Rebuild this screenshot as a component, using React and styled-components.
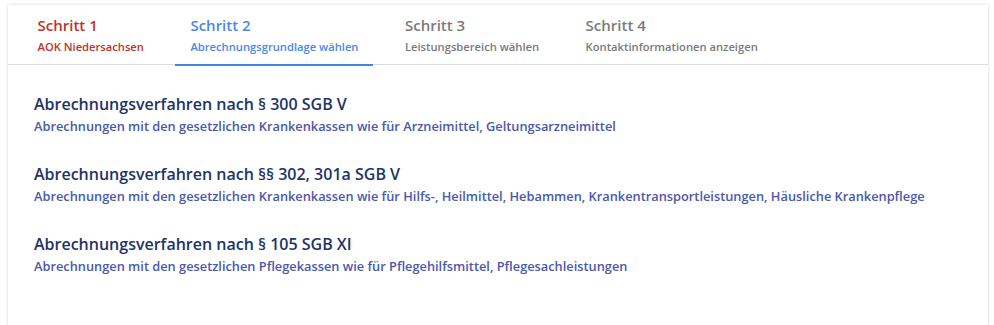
import React from 'react';
import styled, { createGlobalStyle } from 'styled-components';

const GlobalStyle = createGlobalStyle`
  body {
    margin: 0;
    background: #ffffff;
    font-family: "Open Sans", "Liberation Sans", sans-serif;
  }
`;

const Page = styled.div`
  padding: 5px 6px 0 8px;
  height: 325px;
  box-sizing: border-box;
  overflow: hidden;
`;

const Card = styled.div`
  background: #fff;
  height: 340px;
  box-shadow: 0 0 3px rgba(0, 0, 0, 0.18);
`;

const TabList = styled.div`
  display: flex;
  gap: 16.5px;
  padding: 0 14px 0 14.5px;
  border-bottom: 1px solid #dcdcdc;
  height: 59px;
`;

const Tab = styled.div`
  display: flex;
  flex-direction: column;
  padding: 9px 15px 0;
  box-sizing: border-box;
  margin-bottom: -2px;
  border-bottom: 2px solid ${p => (p.active ? '#3f86ea' : 'transparent')};
  color: ${p => p.color};
`;

const TabTitle = styled.span`
  font-size: 15px;
  font-weight: 600;
  line-height: 22px;
`;

const TabSub = styled.span`
  font-size: 11.2px;
  font-weight: 600;
  line-height: 16px;
  margin-top: 3px;
`;

const List = styled.div`
  display: flex;
  flex-direction: column;
  gap: 28px;
  padding: 28px 26px;
`;

const Entry = styled.div`
  display: flex;
  flex-direction: column;
  gap: 2px;
`;

const EntryTitle = styled.div`
  font-size: 16px;
  font-weight: 600;
  color: #1d3468;
  line-height: 22px;
`;

const EntryText = styled.div`
  font-size: 12.8px;
  font-weight: 600;
  color: #4a58ad;
  line-height: 18px;
`;

const steps = [
  { title: 'Schritt 1', sub: 'AOK Niedersachsen', color: '#c0332b' },
  { title: 'Schritt 2', sub: 'Abrechnungsgrundlage wählen', color: '#4b87ea', active: true },
  { title: 'Schritt 3', sub: 'Leistungsbereich wählen', color: '#7a7a7a' },
  { title: 'Schritt 4', sub: 'Kontaktinformationen anzeigen', color: '#7a7a7a' },
];

const entries = [
  {
    title: 'Abrechnungsverfahren nach § 300 SGB V',
    text: 'Abrechnungen mit den gesetzlichen Krankenkassen wie für Arzneimittel, Geltungsarzneimittel',
  },
  {
    title: 'Abrechnungsverfahren nach §§ 302, 301a SGB V',
    text: 'Abrechnungen mit den gesetzlichen Krankenkassen wie für Hilfs-, Heilmittel, Hebammen, Krankentransportleistungen, Häusliche Krankenpflege',
  },
  {
    title: 'Abrechnungsverfahren nach § 105 SGB XI',
    text: 'Abrechnungen mit den gesetzlichen Pflegekassen wie für Pflegehilfsmittel, Pflegesachleistungen',
  },
];

const App = () => (
  <Page>
    <GlobalStyle />
    <Card>
      <TabList>
        {steps.map(s => (
          <Tab key={s.title} color={s.color} active={s.active}>
            <TabTitle>{s.title}</TabTitle>
            <TabSub>{s.sub}</TabSub>
          </Tab>
        ))}
      </TabList>
      <List>
        {entries.map(e => (
          <Entry key={e.title}>
            <EntryTitle>{e.title}</EntryTitle>
            <EntryText>{e.text}</EntryText>
          </Entry>
        ))}
      </List>
    </Card>
  </Page>
);

export default App;
